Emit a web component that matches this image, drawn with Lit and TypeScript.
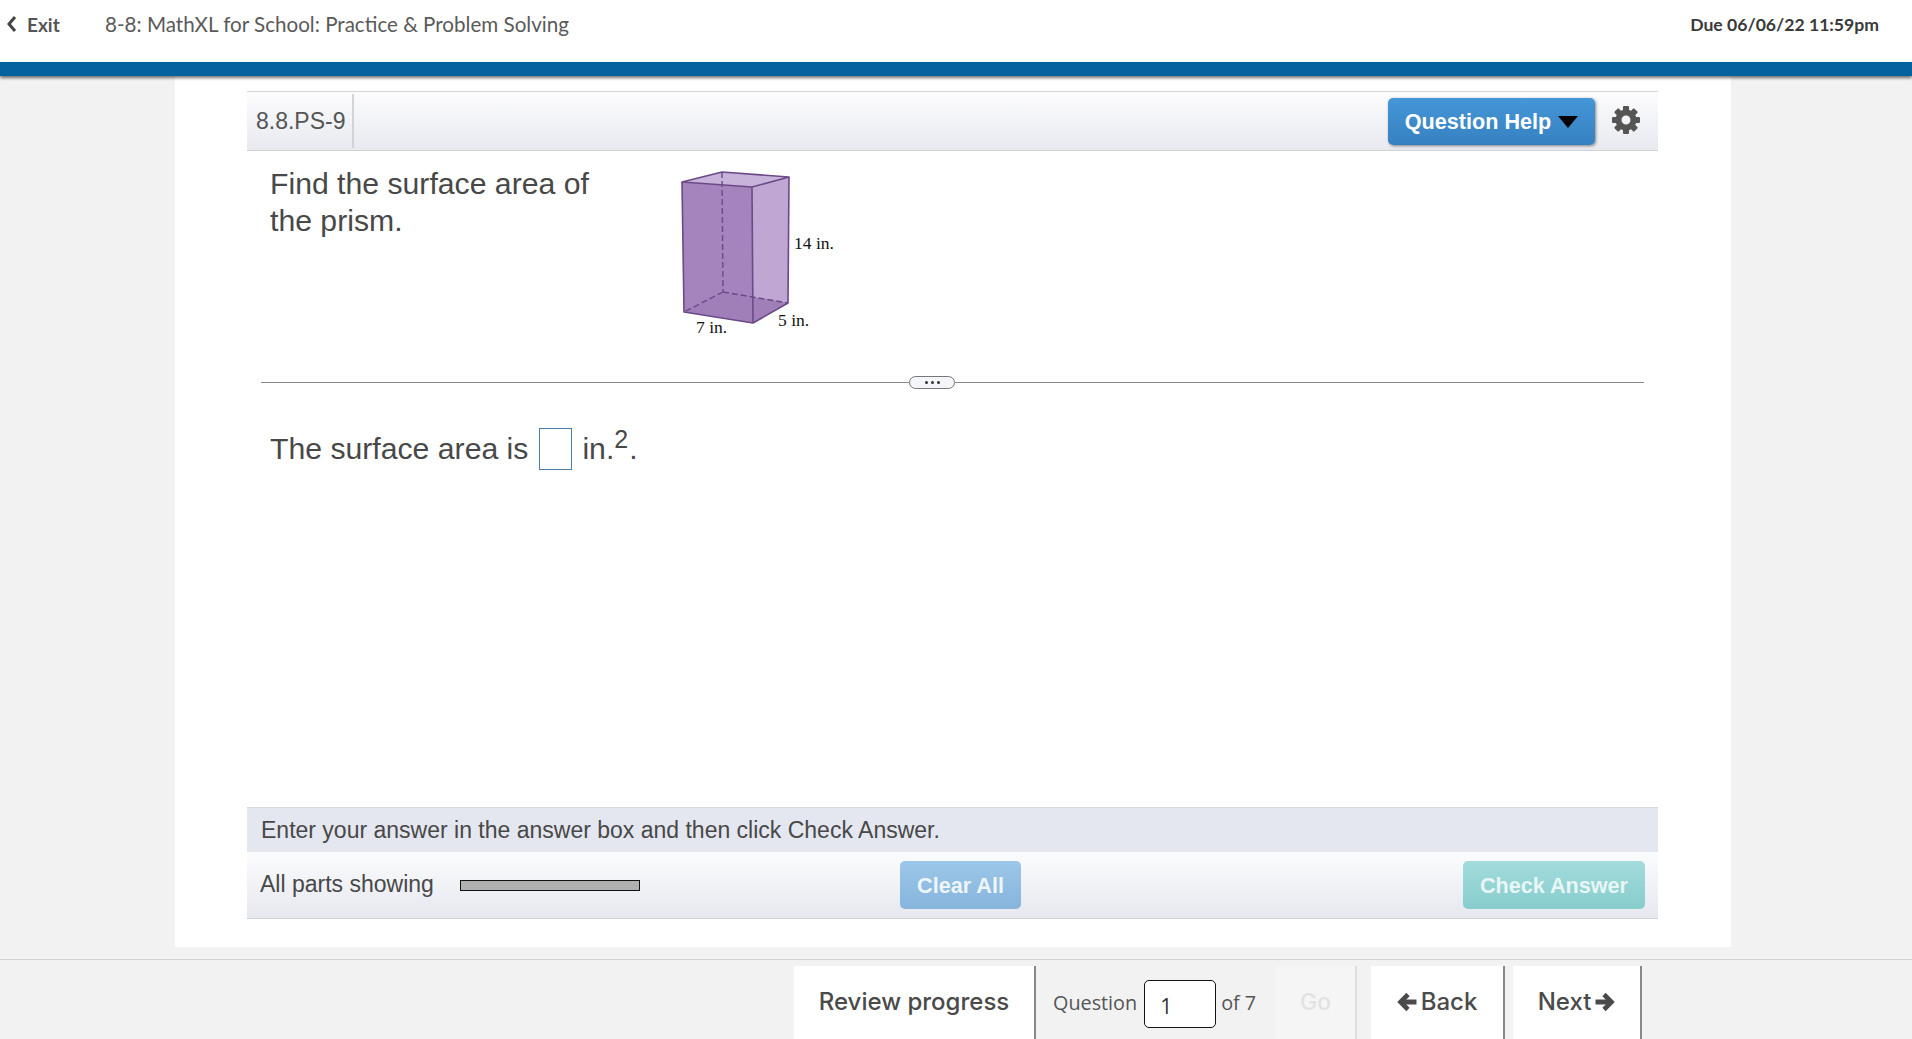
import { LitElement, html, css, svg } from "lit";
import { customElement } from "lit/decorators.js";

const TEETH = [0, 45, 90, 135, 180, 225, 270, 315];

@customElement("app-root")
export class AppRoot extends LitElement {
  static styles = css`
    :host { display: block; height: 1039px; overflow: hidden; background: #f2f2f2; font-family: "Liberation Sans", Arial, sans-serif; color: #484848; }
    .page { display: flex; flex-direction: column; height: 1039px; }
    .top { flex: none; background: #fff; display: flex; align-items: center; font-family: Lato, sans-serif; padding-bottom: 14px; box-sizing: border-box; height: 62px; color: #555; }
    .exit { display: flex; align-items: center; gap: 10px; margin-left: 6px; width: 99px; font-size: 19px; font-weight: 700; flex: none; }
    .title { font-size: 20.6px; flex: 1; font-weight: 400; color: #5a5a5a; }
    .due { font-size: 17.6px; font-weight: 700; margin-right: 33px; color: #3a3a3a; }
    .bluebar { height: 14px; flex: none; background: #06629e; box-shadow: 0 2px 3px rgba(0,0,0,.55); position: relative; z-index: 1; }
    .panel { flex: none; height: 871px; box-sizing: border-box; margin: 0 181px 0 175px; background: #fff; padding: 15px 73px 28px 72px; display: flex; flex-direction: column; }
    .tools { height: 60px; flex: none; box-sizing: border-box; border-top: 1.5px solid #d4d5d8; border-bottom: 1.5px solid #d0d2d8; background: linear-gradient(#fcfcfd, #e8eaf0); display: flex; align-items: center; }
    .qid { font-size: 23px; width: 107px; box-sizing: border-box; padding-left: 9px; height: 54px; line-height: 55px; border-right: 2px solid #d2d3d6; margin-right: auto; color: #555; }
    .help { width: 207px; height: 47px; border: 0; border-radius: 5px; background: linear-gradient(#4597d8, #3680c0); box-shadow: 1px 1px 3px rgba(0,0,0,.45); color: #fff; font: 700 21.6px "Liberation Sans", Arial, sans-serif; display: flex; align-items: center; justify-content: center; gap: 7px; padding: 2px 0 0; }
    .tri { width: 0; height: 0; border-left: 10px solid transparent; border-right: 10px solid transparent; border-top: 12px solid #000; }
    .gear { width: 30px; height: 30px; margin: 0 17px 2px 16px; display: block; flex: none; }
    .stem { height: 225px; flex: none; display: flex; }
    .stemtext { font-size: 30.2px; line-height: 37px; width: 345px; margin-left: 23px; padding-top: 14px; flex: none; box-sizing: border-box; color: #484848; }
    .fig { width: 220px; height: 200px; flex: none; margin: -1px 0 0 35px; display: block; }
    .divider { height: 13px; flex: none; margin: 0 14px; display: flex; align-items: center; }
    .divider i { flex: 1; height: 1px; background: #888; }
    .divider i.l { flex: none; width: 648px; }
    .handle { width: 46px; height: 13px; box-sizing: border-box; border: 1px solid #777; border-radius: 7px; background: #f4f5f8; display: flex; align-items: center; justify-content: center; gap: 3px; flex: none; }
    .handle b { width: 3px; height: 3px; background: #333; border-radius: 50%; }
    .answer { flex: 1; font-size: 30.2px; padding: 39px 0 0 23px; line-height: 42px; display: flex; align-items: flex-start; }
    .box { display: inline-block; width: 33px; height: 42px; box-sizing: border-box; border: 1px solid #4d7ba3; margin: 0 10px 0 11px; }
    sup { font-size: 25px; line-height: 0; position: relative; vertical-align: baseline; top: -11px; }
    .dot { margin-left: 1px; }
    .hint { height: 45px; flex: none; box-sizing: border-box; border-top: 1.5px solid #d5d7dc; background: #e4e7ef; font-size: 23px; line-height: 45px; padding-left: 14px; }
    .actions { height: 67px; flex: none; box-sizing: border-box; border-bottom: 1.5px solid #cfd1d6; background: linear-gradient(#fbfcfd, #e6e8ef); display: flex; align-items: center; padding: 0 13px; }
    .parts { font-size: 23px; width: 200px; flex: none; margin-top: -2px; }
    .prog { width: 180px; height: 11px; box-sizing: border-box; flex: none; border: 1px solid #111; background: #b0b0b0; margin-right: 260px; }
    .btn { height: 48px; border: 0; border-radius: 5px; color: #fff; font: 700 21.6px "Liberation Sans", Arial, sans-serif; padding: 1px 0 0; }
    .clear { width: 121px; background: linear-gradient(#9cc7e9, #86b4dc); margin-right: auto; color: #eef5fb; }
    .check { width: 182px; background: linear-gradient(#a3dbdd, #87cdcb); color: #e8f6f6; }
    .foot { flex: none; height: 80px; margin-top: 12px; border-top: 1.5px solid #d2d2d2; box-sizing: border-box; display: flex; padding: 6px 0 0 794px; font-family: Inter, sans-serif; color: #4a4a4a; }
    .seg { height: 100%; box-sizing: border-box; display: flex; align-items: center; justify-content: center; background: #fff; border-right: 2px solid #888; font-size: 24px; font-weight: 500; padding-bottom: 2px; flex: none; }
    .review { width: 242px; }
    .qnav { width: 240px; background: #f2f2f2; border: 0; font-family: "Open Sans", sans-serif; font-size: 19.8px; font-weight: 400; gap: 6px; justify-content: flex-start; padding: 0 0 1px 17px; color: #555; }
    .qnum { width: 72px; height: 48px; box-sizing: border-box; border: 1.5px solid #111; border-radius: 5px; background: #fff; display: flex; align-items: center; padding: 5px 0 0 15px; color: #333; font: 400 21px "Open Sans", sans-serif; margin: 3px -1px 0 1px; flex: none; }
    .go { width: 81px; background: #f5f5f5; border-right: 2px solid #dedede; color: #e2e2e2; font-size: 23px; margin-right: 14px; }
    .back { width: 134px; margin-right: 8px; gap: 4px; }
    .next { width: 129px; gap: 4px; }
    .arrow { width: 20px; height: 22px; flex: none; fill: none; stroke: #4a4a4a; }
    .arrow .head { stroke-width: 4.6; }
    .arrow .shaft { stroke-width: 5; }
  `;

  private prism() {
    return svg`
      <polygon points="32,32 102,37 103,173 34,162" fill="#a583bd"/>
      <polygon points="102,37 139,27 138,153 103,173" fill="#bfa6d3"/>
      <polygon points="32,32 72,22 139,27 102,37" fill="#c8b3da"/>
      <polygon points="34,162 73,142 138,153 103,173" fill="#a07fb9"/>
      <g fill="none" stroke="#6b4a87" stroke-width="1.6" stroke-linejoin="round">
        <path d="M32 32L102 37L139 27L72 22Z"/>
        <path d="M32 32L34 162L103 173L138 153L139 27"/>
        <path d="M102 37L103 173"/>
        <path d="M72 22L73 142M73 142L34 162M73 142L138 153" stroke-dasharray="6 3" stroke-width="1.4"/>
      </g>
      <g font-family="'Liberation Serif', serif" font-size="17.5" fill="#111">
        <text x="144" y="99">14 in.</text>
        <text x="128" y="176">5 in.</text>
        <text x="46" y="183">7 in.</text>
      </g>`;
  }

  private gear() {
    return svg`
      <g fill="#555">
        ${TEETH.map((a) => svg`<rect x="12" y="1" width="6" height="8" rx="1" transform="rotate(${a} 15 15)"/>`)}
      </g>
      <circle cx="15" cy="15" r="7.5" fill="none" stroke="#555" stroke-width="6"/>`;
  }

  render() {
    return html`
      <div class="page">
        <div class="top">
          <div class="exit">
            <svg width="11" height="18" viewBox="0 0 11 18"><path d="M9 2L3 9L9 16" fill="none" stroke="#444" stroke-width="3"/></svg>
            <span>Exit</span>
          </div>
          <div class="title">8-8: MathXL for School: Practice &amp; Problem Solving</div>
          <div class="due">Due 06/06/22 11:59pm</div>
        </div>
        <div class="bluebar"></div>
        <div class="panel">
          <div class="tools">
            <div class="qid">8.8.PS-9</div>
            <button class="help">Question Help <span class="tri"></span></button>
            <svg class="gear" viewBox="0 0 30 30">${this.gear()}</svg>
          </div>
          <div class="stem">
            <div class="stemtext">Find the surface area of the prism.</div>
            <svg class="fig" viewBox="0 0 220 200">${this.prism()}</svg>
          </div>
          <div class="divider"><i class="l"></i><span class="handle"><b></b><b></b><b></b></span><i></i></div>
          <div class="answer"><span>The surface area is</span><span class="box"></span><span>in.<sup>2</sup><span class="dot">.</span></span></div>
          <div class="hint">Enter your answer in the answer box and then click Check Answer.</div>
          <div class="actions">
            <div class="parts">All parts showing</div>
            <div class="prog"></div>
            <button class="btn clear">Clear All</button>
            <button class="btn check">Check Answer</button>
          </div>
        </div>
        <div class="foot">
          <div class="seg review">Review progress</div>
          <div class="seg qnav">Question <div class="qnum">1</div> of 7</div>
          <div class="seg go">Go</div>
          <div class="seg back"><svg class="arrow" viewBox="0 0 20 22"><path class="head" d="M11 3.5L3.5 11L11 18.5"/><path class="shaft" d="M5 11H19.5"/></svg>Back</div>
          <div class="seg next">Next<svg class="arrow" viewBox="0 0 20 22"><path class="head" d="M9 3.5L16.5 11L9 18.5"/><path class="shaft" d="M0.5 11H15"/></svg></div>
        </div>
      </div>
    `;
  }
}
